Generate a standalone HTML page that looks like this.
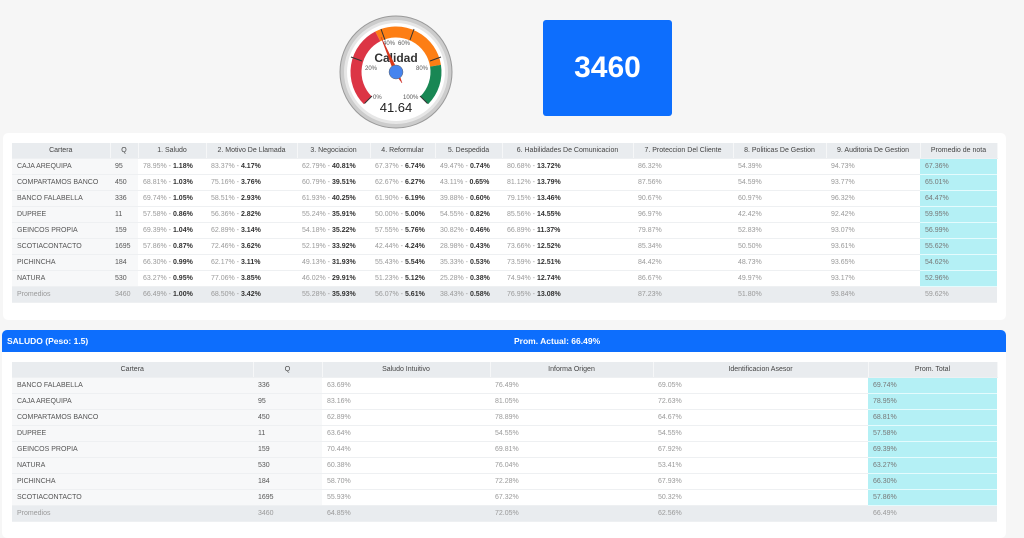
<!DOCTYPE html>
<html><head><meta charset="utf-8">
<style>
*{margin:0;padding:0;box-sizing:border-box}
html,body{width:1024px;height:538px;overflow:hidden}
body{background:#f6f6f6;font-family:"Liberation Sans",sans-serif;color:#444;position:relative}
.card{position:absolute;background:#fff;border-radius:5px}
table{border-collapse:collapse;table-layout:fixed;position:absolute}
td,th{font-size:7px;height:16px;padding:0 5px;white-space:nowrap;overflow:hidden;border-bottom:1px solid #eef0f2}
th{background:#e9ecef;font-weight:normal;color:#444;text-align:center;height:15px;border-right:1px solid #f6f7f8}
td{color:#999}
td.l{background:#f7f8f9;color:#555}
td b{color:#333}
td.c{background:#b4f0f5;color:#777;border-bottom:1px solid #e4fbfd}
tr.p td{background:#e9ecef;color:#999}
.hdr{position:absolute;left:2px;top:330px;width:1004px;height:22px;background:#0d6efd;border-radius:5px 5px 0 0;color:#fff;font-size:8.5px;font-weight:bold}
</style></head><body>

<svg style="position:absolute;left:0;top:0" width="1024" height="130">
 <circle cx="396" cy="72" r="56" fill="#ccc" stroke="#999" stroke-width="1"/>
 <circle cx="396" cy="72" r="52" fill="#e6e6e6"/>
 <circle cx="396" cy="72" r="49" fill="#fff"/>
 <path d="M367.72,100.28 A40 40 0 0 1 377.84,36.36" fill="none" stroke="#dc3545" stroke-width="11"/>
 <path d="M377.84,36.36 A40 40 0 0 1 435.51,65.74" fill="none" stroke="#fd7e14" stroke-width="11"/>
 <path d="M435.51,65.74 A40 40 0 0 1 424.28,100.28" fill="none" stroke="#198754" stroke-width="11"/>
 <g stroke="#333" stroke-width="1">
  <line x1="364.5" y1="103.5" x2="372" y2="96"/>
  <line x1="351" y1="57" x2="362" y2="61"/>
  <line x1="381" y1="29" x2="385" y2="40"/>
  <line x1="414" y1="29" x2="410" y2="40"/>
  <line x1="441" y1="57" x2="430" y2="61"/>
  <line x1="427.5" y1="103.5" x2="420" y2="96"/>
 </g>
 <g font-size="6" fill="#555" font-family="Liberation Sans,sans-serif">
  <text x="373" y="99">0%</text>
  <text x="365" y="70">20%</text>
  <text x="383" y="45">40%</text>
  <text x="398" y="45">60%</text>
  <text x="416" y="70">80%</text>
  <text x="403" y="99">100%</text>
 </g>
 <text x="396" y="62" text-anchor="middle" font-size="12" font-weight="bold" fill="#333" font-family="Liberation Sans,sans-serif">Calidad</text>
 <text x="396" y="112" text-anchor="middle" font-size="13" fill="#222" font-family="Liberation Sans,sans-serif">41.64</text>
 <path d="M381,37 L398.5,72.5 L402,83 L394,72 Z" fill="#dc3912" stroke="#c33" stroke-width="0.5"/>
 <circle cx="396" cy="72" r="7" fill="#4684ee" stroke="#666" stroke-width="0.5"/>
</svg>

<div style="position:absolute;left:543px;top:20px;width:129px;height:96px;background:#0d6efd;border-radius:3px;color:#fff;font-size:30px;font-weight:bold;display:flex;align-items:center;justify-content:center">3460</div>

<div class="card" style="left:3px;top:133px;width:1003px;height:187px"></div>
<table style="left:12px;top:143px;width:985px">
<colgroup><col style="width:98px"><col style="width:28px"><col style="width:68px"><col style="width:91px"><col style="width:73px"><col style="width:65px"><col style="width:67px"><col style="width:131px"><col style="width:100px"><col style="width:93px"><col style="width:94px"><col style="width:77px"></colgroup>
<tr><th>Cartera</th><th>Q</th><th>1. Saludo</th><th>2. Motivo De Llamada</th><th>3. Negociacion</th><th>4. Reformular</th><th>5. Despedida</th><th>6. Habilidades De Comunicacion</th><th>7. Proteccion Del Cliente</th><th>8. Politicas De Gestion</th><th>9. Auditoria De Gestion</th><th>Promedio de nota</th></tr>
<tr><td class="l">CAJA AREQUIPA</td><td class="l">95</td><td>78.95% - <b>1.18%</b></td><td>83.37% - <b>4.17%</b></td><td>62.79% - <b>40.81%</b></td><td>67.37% - <b>6.74%</b></td><td>49.47% - <b>0.74%</b></td><td>80.68% - <b>13.72%</b></td><td>86.32%</td><td>54.39%</td><td>94.73%</td><td class="c">67.36%</td></tr>
<tr><td class="l">COMPARTAMOS BANCO</td><td class="l">450</td><td>68.81% - <b>1.03%</b></td><td>75.16% - <b>3.76%</b></td><td>60.79% - <b>39.51%</b></td><td>62.67% - <b>6.27%</b></td><td>43.11% - <b>0.65%</b></td><td>81.12% - <b>13.79%</b></td><td>87.56%</td><td>54.59%</td><td>93.77%</td><td class="c">65.01%</td></tr>
<tr><td class="l">BANCO FALABELLA</td><td class="l">336</td><td>69.74% - <b>1.05%</b></td><td>58.51% - <b>2.93%</b></td><td>61.93% - <b>40.25%</b></td><td>61.90% - <b>6.19%</b></td><td>39.88% - <b>0.60%</b></td><td>79.15% - <b>13.46%</b></td><td>90.67%</td><td>60.97%</td><td>96.32%</td><td class="c">64.47%</td></tr>
<tr><td class="l">DUPREE</td><td class="l">11</td><td>57.58% - <b>0.86%</b></td><td>56.36% - <b>2.82%</b></td><td>55.24% - <b>35.91%</b></td><td>50.00% - <b>5.00%</b></td><td>54.55% - <b>0.82%</b></td><td>85.56% - <b>14.55%</b></td><td>96.97%</td><td>42.42%</td><td>92.42%</td><td class="c">59.95%</td></tr>
<tr><td class="l">GEINCOS PROPIA</td><td class="l">159</td><td>69.39% - <b>1.04%</b></td><td>62.89% - <b>3.14%</b></td><td>54.18% - <b>35.22%</b></td><td>57.55% - <b>5.76%</b></td><td>30.82% - <b>0.46%</b></td><td>66.89% - <b>11.37%</b></td><td>79.87%</td><td>52.83%</td><td>93.07%</td><td class="c">56.99%</td></tr>
<tr><td class="l">SCOTIACONTACTO</td><td class="l">1695</td><td>57.86% - <b>0.87%</b></td><td>72.46% - <b>3.62%</b></td><td>52.19% - <b>33.92%</b></td><td>42.44% - <b>4.24%</b></td><td>28.98% - <b>0.43%</b></td><td>73.66% - <b>12.52%</b></td><td>85.34%</td><td>50.50%</td><td>93.61%</td><td class="c">55.62%</td></tr>
<tr><td class="l">PICHINCHA</td><td class="l">184</td><td>66.30% - <b>0.99%</b></td><td>62.17% - <b>3.11%</b></td><td>49.13% - <b>31.93%</b></td><td>55.43% - <b>5.54%</b></td><td>35.33% - <b>0.53%</b></td><td>73.59% - <b>12.51%</b></td><td>84.42%</td><td>48.73%</td><td>93.65%</td><td class="c">54.62%</td></tr>
<tr><td class="l">NATURA</td><td class="l">530</td><td>63.27% - <b>0.95%</b></td><td>77.06% - <b>3.85%</b></td><td>46.02% - <b>29.91%</b></td><td>51.23% - <b>5.12%</b></td><td>25.28% - <b>0.38%</b></td><td>74.94% - <b>12.74%</b></td><td>86.67%</td><td>49.97%</td><td>93.17%</td><td class="c">52.96%</td></tr>
<tr class="p"><td>Promedios</td><td>3460</td><td>66.49% - <b>1.00%</b></td><td>68.50% - <b>3.42%</b></td><td>55.28% - <b>35.93%</b></td><td>56.07% - <b>5.61%</b></td><td>38.43% - <b>0.58%</b></td><td>76.95% - <b>13.08%</b></td><td>87.23%</td><td>51.80%</td><td>93.84%</td><td>59.62%</td></tr>
</table>

<div class="card" style="left:2px;top:330px;width:1004px;height:208px"></div>
<div class="hdr"><span style="position:absolute;left:5px;top:6px">SALUDO (Peso: 1.5)</span><span style="position:absolute;left:512px;top:6px">Prom. Actual: 66.49%</span></div>
<table style="left:12px;top:362px;width:985px">
<colgroup><col style="width:241px"><col style="width:69px"><col style="width:168px"><col style="width:163px"><col style="width:215px"><col style="width:129px"></colgroup>
<tr><th>Cartera</th><th>Q</th><th>Saludo Intuitivo</th><th>Informa Origen</th><th>Identificacion Asesor</th><th>Prom. Total</th></tr>
<tr><td class="l">BANCO FALABELLA</td><td class="l">336</td><td>63.69%</td><td>76.49%</td><td>69.05%</td><td class="c">69.74%</td></tr>
<tr><td class="l">CAJA AREQUIPA</td><td class="l">95</td><td>83.16%</td><td>81.05%</td><td>72.63%</td><td class="c">78.95%</td></tr>
<tr><td class="l">COMPARTAMOS BANCO</td><td class="l">450</td><td>62.89%</td><td>78.89%</td><td>64.67%</td><td class="c">68.81%</td></tr>
<tr><td class="l">DUPREE</td><td class="l">11</td><td>63.64%</td><td>54.55%</td><td>54.55%</td><td class="c">57.58%</td></tr>
<tr><td class="l">GEINCOS PROPIA</td><td class="l">159</td><td>70.44%</td><td>69.81%</td><td>67.92%</td><td class="c">69.39%</td></tr>
<tr><td class="l">NATURA</td><td class="l">530</td><td>60.38%</td><td>76.04%</td><td>53.41%</td><td class="c">63.27%</td></tr>
<tr><td class="l">PICHINCHA</td><td class="l">184</td><td>58.70%</td><td>72.28%</td><td>67.93%</td><td class="c">66.30%</td></tr>
<tr><td class="l">SCOTIACONTACTO</td><td class="l">1695</td><td>55.93%</td><td>67.32%</td><td>50.32%</td><td class="c">57.86%</td></tr>
<tr class="p"><td>Promedios</td><td>3460</td><td>64.85%</td><td>72.05%</td><td>62.56%</td><td>66.49%</td></tr>
</table>
</body></html>
